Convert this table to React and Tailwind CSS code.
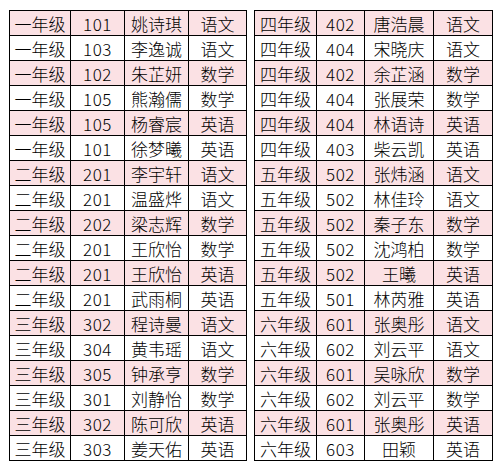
import React from 'react';

const left = [
  ['一年级', '101', '姚诗琪', '语文'],
  ['一年级', '103', '李逸诚', '语文'],
  ['一年级', '102', '朱芷妍', '数学'],
  ['一年级', '105', '熊瀚儒', '数学'],
  ['一年级', '105', '杨睿宸', '英语'],
  ['一年级', '101', '徐梦曦', '英语'],
  ['二年级', '201', '李宇轩', '语文'],
  ['二年级', '201', '温盛烨', '语文'],
  ['二年级', '202', '梁志辉', '数学'],
  ['二年级', '201', '王欣怡', '数学'],
  ['二年级', '201', '王欣怡', '英语'],
  ['二年级', '201', '武雨桐', '英语'],
  ['三年级', '302', '程诗曼', '语文'],
  ['三年级', '304', '黄韦瑶', '语文'],
  ['三年级', '305', '钟承亨', '数学'],
  ['三年级', '301', '刘静怡', '数学'],
  ['三年级', '302', '陈可欣', '英语'],
  ['三年级', '303', '姜天佑', '英语'],
];

const right = [
  ['四年级', '402', '唐浩晨', '语文'],
  ['四年级', '404', '宋晓庆', '语文'],
  ['四年级', '402', '余芷涵', '数学'],
  ['四年级', '404', '张展荣', '数学'],
  ['四年级', '404', '林语诗', '英语'],
  ['四年级', '403', '柴云凯', '英语'],
  ['五年级', '502', '张炜涵', '语文'],
  ['五年级', '502', '林佳玲', '语文'],
  ['五年级', '502', '秦子东', '数学'],
  ['五年级', '502', '沈鸿柏', '数学'],
  ['五年级', '502', '王曦', '英语'],
  ['五年级', '501', '林芮雅', '英语'],
  ['六年级', '601', '张奥彤', '语文'],
  ['六年级', '602', '刘云平', '语文'],
  ['六年级', '601', '吴咏欣', '数学'],
  ['六年级', '602', '刘云平', '数学'],
  ['六年级', '601', '张奥彤', '英语'],
  ['六年级', '603', '田颖', '英语'],
];

const Sheet = ({ rows, widths }) => (
  <div className="border-l border-t border-black">
    {rows.map((row, i) => (
      <div key={i} className={`flex ${i % 2 === 0 ? 'bg-[#fbe1e4]' : 'bg-white'}`}>
        {row.map((cell, j) => (
          <div
            key={j}
            className={`${widths[j]} h-[25px] border-r border-b border-black flex items-center justify-center leading-none font-light ${
              j === 1 ? 'text-[17px] tracking-[0.5px]' : ''
            }`}
          >
            {cell}
          </div>
        ))}
      </div>
    ))}
  </div>
);

export default function App() {
  return (
    <div
      className="w-[500px] h-[471px] bg-white pt-[10px] pl-[9px] flex items-start gap-[7px] text-[17px] text-black"
      style={{ fontFamily: '"Noto Sans CJK SC", "Liberation Sans", sans-serif' }}
    >
      <Sheet rows={left} widths={['w-[61px]', 'w-[54px]', 'w-[64px]', 'w-[58px]']} />
      <Sheet rows={right} widths={['w-[62px]', 'w-[48px]', 'w-[69px]', 'w-[59px]']} />
    </div>
  );
}
